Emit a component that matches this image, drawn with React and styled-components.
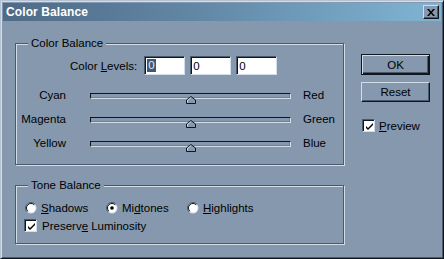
import React from "react";
import styled, { createGlobalStyle } from "styled-components";

const FACE = "#8598ae";
const LIGHT = "#d3dde8";
const SHADOW = "#4a5a6d";
const DARK = "#10161d";

const GlobalStyle = createGlobalStyle`
  html, body {
    margin: 0;
    padding: 0;
    background: ${FACE};
  }
  body {
    font-family: "Liberation Sans", Arial, sans-serif;
    font-size: 11.5px;
    color: #000;
  }
`;

const sliders = [
  { left: "Cyan", right: "Red", value: 0.5 },
  { left: "Magenta", right: "Green", value: 0.5 },
  { left: "Yellow", right: "Blue", value: 0.5 },
];

const tones = [
  { label: "Shadows", key: 0, checked: false },
  { label: "Midtones", key: 2, checked: true },
  { label: "Highlights", key: 0, checked: false },
];

const withKey = (text, index) => (
  <>
    {text.slice(0, index)}
    <u>{text[index]}</u>
    {text.slice(index + 1)}
  </>
);

const Radio = ({ checked }) => (
  <RadioBox>
    <svg width="12" height="12" viewBox="0 0 12 12">
      <circle cx="6" cy="6" r="5.5" fill={LIGHT} />
      <path d="M2.1 9.9 A5.5 5.5 0 0 1 9.9 2.1" stroke={SHADOW} strokeWidth="1" fill="none" />
      <circle cx="6" cy="6" r="4.5" fill="#fff" />
      <path d="M2.8 9.2 A4.5 4.5 0 0 1 9.2 2.8" stroke={DARK} strokeWidth="1" fill="none" />
      {checked && <circle cx="6" cy="6" r="1.8" fill="#000" />}
    </svg>
  </RadioBox>
);

const Check = ({ checked }) => (
  <CheckBox>
    {checked && (
      <svg width="9" height="9" viewBox="0 0 9 9">
        <path d="M1 4 L3 6 L8 1 L8 3 L3 8 L1 6 Z" fill="#000" />
      </svg>
    )}
  </CheckBox>
);

export default function App() {
  return (
    <>
      <GlobalStyle />
      <Window>
        <TitleBar>
          <Title>Color Balance</Title>
          <CloseButton>
            <svg width="8" height="7" viewBox="0 0 8 7">
              <path d="M0 0h2l2 2.5L6 0h2L5 3.5 8 7H6L4 4.5 2 7H0l3-3.5z" fill="#000" />
            </svg>
          </CloseButton>
        </TitleBar>

        <Body>
          <Main>
            <Group $height={122}>
              <Legend>Color Balance</Legend>
              <LevelsRow>
                <LevelsLabel>Color {withKey("Levels:", 0)}</LevelsLabel>
                <LevelInput>
                  <Selected>0</Selected>
                </LevelInput>
                <LevelInput>0</LevelInput>
                <LevelInput>0</LevelInput>
              </LevelsRow>
              {sliders.map((s) => (
                <SliderRow key={s.left}>
                  <SideLabel $side="left">{s.left}</SideLabel>
                  <Track>
                    <Thumb style={{ left: `${s.value * 100}%` }}>
                      <svg width="10" height="8" viewBox="0 0 10 8">
                        <path d="M5 0.5 L9.5 4 L9.5 7.5 L0.5 7.5 L0.5 4 Z" fill={FACE} stroke={DARK} />
                        <path d="M1.5 6.5 L1.5 4.4 L5 1.7" stroke={LIGHT} fill="none" />
                      </svg>
                    </Thumb>
                  </Track>
                  <SideLabel $side="right">{s.right}</SideLabel>
                </SliderRow>
              ))}
            </Group>

            <Group $height={59}>
              <Legend>Tone Balance</Legend>
              <RadioRow>
                {tones.map((t) => (
                  <Option key={t.label}>
                    <Radio checked={t.checked} />
                    <span>{withKey(t.label, t.key)}</span>
                  </Option>
                ))}
              </RadioRow>
              <CheckRow>
                <Check checked />
                <span>Preser{withKey("ve", 1)} Luminosity</span>
              </CheckRow>
            </Group>
          </Main>

          <Side>
            <Button $default>OK</Button>
            <Button>Reset</Button>
            <PreviewRow>
              <Check checked />
              <span>{withKey("Preview", 0)}</span>
            </PreviewRow>
          </Side>
        </Body>
      </Window>
    </>
  );
}

const Window = styled.div`
  width: 444px;
  height: 259px;
  box-sizing: border-box;
  padding: 2px;
  background: ${FACE};
  border: 1px solid;
  border-color: #b4c2d1 ${DARK} ${DARK} #b4c2d1;
  box-shadow: inset 1px 1px 0 ${LIGHT}, inset -1px -1px 0 ${SHADOW};
  display: flex;
  flex-direction: column;
`;

const TitleBar = styled.div`
  height: 18px;
  display: flex;
  align-items: center;
  justify-content: space-between;
  padding: 0 2px 0 3px;
  background: linear-gradient(90deg, #4f6a86 0%, #6288a6 45%, #80b4d4 100%);
`;

const Title = styled.span`
  color: #fff;
  font-weight: bold;
  font-size: 12px;
  letter-spacing: 0.1px;
`;

const CloseButton = styled.div`
  width: 16px;
  height: 14px;
  box-sizing: border-box;
  display: flex;
  align-items: center;
  justify-content: center;
  background: ${FACE};
  border: 1px solid;
  border-color: ${LIGHT} ${DARK} ${DARK} ${LIGHT};
  box-shadow: inset -1px -1px 0 ${SHADOW};
`;

const Body = styled.div`
  display: flex;
  padding: 22px 0 0 12px;
`;

const Main = styled.div`
  width: 329px;
  display: flex;
  flex-direction: column;
  gap: 20px;
`;

const Group = styled.div`
  position: relative;
  height: ${({ $height }) => $height}px;
  box-sizing: border-box;
  border: 1px solid ${SHADOW};
  box-shadow: inset 1px 1px 0 ${LIGHT}, 1px 1px 0 ${LIGHT};
`;

const Legend = styled.span`
  position: absolute;
  top: -7px;
  left: 12px;
  padding: 0 3px;
  line-height: 13px;
  background: ${FACE};
`;

const LevelsRow = styled.div`
  display: flex;
  align-items: center;
  gap: 5px;
  margin: 12px 0 0 54px;
`;

const LevelsLabel = styled.span`
  margin-right: 2px;
  white-space: nowrap;
`;

const LevelInput = styled.div`
  width: 41px;
  height: 19px;
  box-sizing: border-box;
  padding-left: 2px;
  display: flex;
  align-items: center;
  background: #fff;
  border: 1px solid;
  border-color: ${SHADOW} ${LIGHT} ${LIGHT} ${SHADOW};
  box-shadow: inset 1px 1px 0 ${DARK};
`;

const Selected = styled.span`
  background: #3e5875;
  color: #e4ebf2;
  padding: 0 1px;
  line-height: 13px;
`;

const SliderRow = styled.div`
  height: 24px;
  display: flex;
  align-items: center;
  margin-top: 9px;

  & + & {
    margin-top: 0;
  }
`;

const SideLabel = styled.span`
  width: ${({ $side }) => ($side === "left" ? "50px" : "auto")};
  text-align: ${({ $side }) => ($side === "left" ? "right" : "left")};
  margin: ${({ $side }) => ($side === "left" ? "0 24px 0 0" : "0 0 0 12px")};
  margin-top: -2px;
`;

const Track = styled.div`
  position: relative;
  width: 201px;
  height: 6px;
  box-sizing: border-box;
  background: ${FACE};
  border: 1px solid;
  border-color: ${DARK} ${LIGHT} ${LIGHT} ${DARK};
  box-shadow: inset -1px -1px 0 #6d8097;
`;

const Thumb = styled.div`
  position: absolute;
  top: 2px;
  transform: translateX(-50%);
  width: 10px;
  height: 8px;
  line-height: 0;
`;

const RadioRow = styled.div`
  display: flex;
  margin: 16px 0 0 9px;
`;

const Option = styled.label`
  width: 81px;
  display: flex;
  align-items: center;
  gap: 4px;
  white-space: nowrap;
`;

const RadioBox = styled.span`
  width: 12px;
  height: 12px;
  line-height: 0;
`;

const CheckRow = styled.label`
  display: flex;
  align-items: center;
  gap: 5px;
  margin: 5px 0 0 8px;
`;

const CheckBox = styled.span`
  width: 13px;
  height: 13px;
  flex: none;
  box-sizing: border-box;
  display: flex;
  align-items: center;
  justify-content: center;
  background: #fff;
  border: 1px solid;
  border-color: ${SHADOW} ${LIGHT} ${LIGHT} ${SHADOW};
  box-shadow: inset 1px 1px 0 ${DARK};
  padding: 1px 0 0 1px;
`;

const Side = styled.div`
  width: 69px;
  margin-left: 17px;
  padding-top: 11px;
  display: flex;
  flex-direction: column;
`;

const Button = styled.div`
  height: ${({ $default }) => ($default ? "21px" : "20px")};
  margin-top: ${({ $default }) => ($default ? "0" : "7px")};
  box-sizing: border-box;
  display: flex;
  align-items: center;
  justify-content: center;
  background: ${FACE};
  border: 1px solid;
  border-color: ${({ $default }) => ($default ? DARK : `${LIGHT} ${DARK} ${DARK} ${LIGHT}`)};
  box-shadow: ${({ $default }) =>
    $default
      ? `inset 1px 1px 0 ${LIGHT}, inset -1px -1px 0 ${DARK}, inset -2px -2px 0 ${SHADOW}`
      : `inset -1px -1px 0 ${SHADOW}`};
`;

const PreviewRow = styled.label`
  display: flex;
  align-items: center;
  gap: 4px;
  margin: 17px 0 0 1px;
`;
